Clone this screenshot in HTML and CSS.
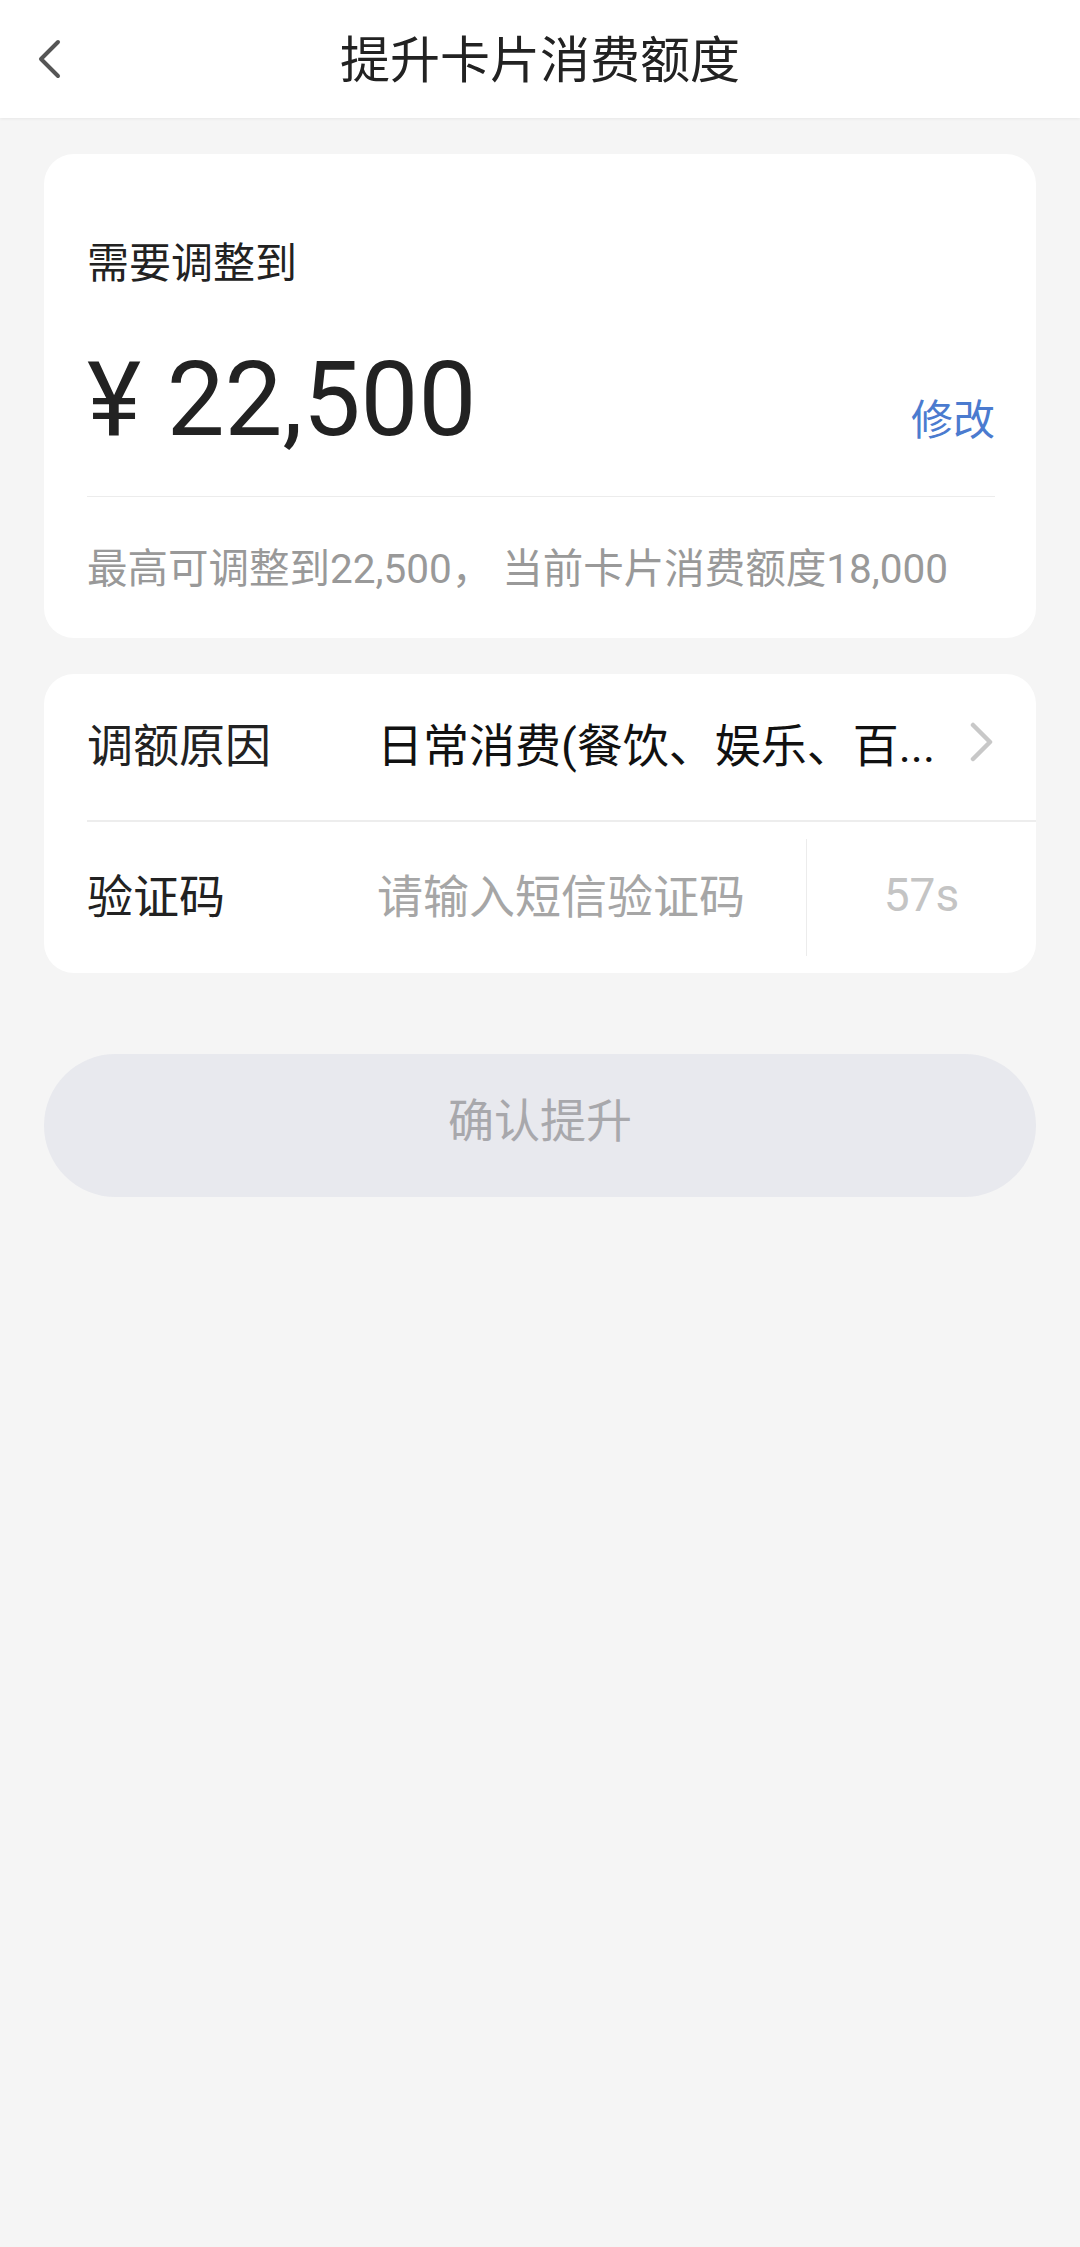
FILE: index.html
```html
<!DOCTYPE html>
<html lang="zh-CN">
<head>
<meta charset="utf-8">
<title>提升卡片消费额度</title>
<link rel="stylesheet" href="styles.css">
</head>
<body>
<header class="topbar">
  <div class="topbar-left">
    <svg class="back-icon" width="28" height="40" viewBox="0 0 28 40"><polyline points="22,3 5,20 22,37" fill="none" stroke="#555" stroke-width="4" stroke-linecap="round" stroke-linejoin="round"/></svg>
  </div>
  <h1 class="title">提升卡片消费额度</h1>
  <div class="topbar-right"></div>
</header>

<main class="content">
  <section class="card amount-card">
    <div class="amount-label">需要调整到</div>
    <div class="amount-row">
      <span class="amount">¥ 22,500</span>
      <span class="edit-link">修改</span>
    </div>
    <div class="amount-note">最高可调整到22,500， 当前卡片消费额度18,000</div>
  </section>

  <section class="card form-card">
    <div class="form-row reason-row">
      <span class="form-label">调额原因</span>
      <span class="form-value">日常消费(餐饮、娱乐、百...</span>
      <svg class="chevron" width="26" height="40" viewBox="0 0 26 40"><polyline points="4,3 21,20 4,37" fill="none" stroke="#c8c8c8" stroke-width="4.5" stroke-linecap="round" stroke-linejoin="round"/></svg>
    </div>
    <div class="form-row code-row">
      <span class="form-label">验证码</span>
      <input class="code-input" type="text" placeholder="请输入短信验证码">
      <span class="vline"></span>
      <span class="countdown">57s</span>
    </div>
  </section>

  <button class="confirm-btn" type="button">确认提升</button>
</main>
</body>
</html>
```

FILE: styles.css
```css
* {
  box-sizing: border-box;
}

html, body {
  margin: 0;
  padding: 0;
}

body {
  width: 1080px;
  min-height: 2247px;
  background: #f5f5f5;
  font-family: Roboto, "Noto Sans CJK SC", sans-serif;
  color: #222;
}

.topbar {
  height: 118px;
  background: #fff;
  display: grid;
  grid-template-columns: 1fr auto 1fr;
  align-items: center;
  box-shadow: 0 1px 3px rgba(0, 0, 0, 0.06);
}

.topbar-left {
  padding-left: 36px;
  display: flex;
  align-items: center;
}

.back-icon {
  display: block;
}

.title {
  margin: 0;
  padding-bottom: 6px;
  font-family: "Noto Sans CJK SC", sans-serif;
  font-weight: 400;
  font-size: 50px;
  line-height: 60px;
  color: #222;
}

.content {
  padding: 36px 44px 0;
  display: flex;
  flex-direction: column;
}

.card {
  background: #fff;
  border-radius: 30px;
}

.amount-card {
  padding: 81px 41px 42px 43px;
}

.amount-label {
  font-family: "Noto Sans CJK SC", sans-serif;
  font-size: 42px;
  line-height: 50px;
  color: #222;
}

.amount-row {
  margin-top: 53px;
  padding-bottom: 34px;
  border-bottom: 1px solid #ececec;
  display: flex;
  justify-content: space-between;
  align-items: baseline;
}

.amount {
  font-family: Roboto, sans-serif;
  font-size: 103px;
  line-height: 124px;
  color: #222;
}

.edit-link {
  font-family: "Noto Sans CJK SC", sans-serif;
  font-size: 42px;
  color: #4b7bcf;
}

.amount-note {
  margin-top: 48px;
  padding-bottom: 2px;
  font-size: 40.5px;
  line-height: 49px;
  color: #999;
  white-space: nowrap;
}

.form-card {
  margin-top: 36px;
  overflow: hidden;
}

.form-row {
  margin-left: 43px;
  display: flex;
  align-items: center;
  font-size: 46px;
  padding-bottom: 10px;
}

.reason-row {
  height: 148px;
  border-bottom: 2px solid #ededed;
  padding-right: 41px;
}

.code-row {
  height: 151px;
}

.form-label {
  width: 290px;
  flex: none;
  font-family: "Noto Sans CJK SC", sans-serif;
  color: #222;
}

.form-value {
  flex: 1;
  font-family: Roboto, "Noto Sans CJK SC", sans-serif;
  color: #111;
  white-space: nowrap;
  overflow: hidden;
}

.chevron {
  flex: none;
  display: block;
}

.code-input {
  flex: 1;
  min-width: 0;
  border: none;
  outline: none;
  background: transparent;
  padding: 0;
  font-family: "Noto Sans CJK SC", sans-serif;
  font-size: 46px;
  color: #222;
}

.code-input::placeholder {
  color: #a6a6a6;
}

.vline {
  flex: none;
  width: 1px;
  height: 117px;
  margin-top: 10px;
  background: #ececec;
}

.countdown {
  width: 229px;
  flex: none;
  padding-top: 4px;
  text-align: center;
  font-family: Roboto, sans-serif;
  font-size: 46px;
  color: #c4c4c4;
}

.confirm-btn {
  margin-top: 81px;
  height: 143px;
  border: none;
  border-radius: 72px;
  background: #e8e9ee;
  font-family: "Noto Sans CJK SC", sans-serif;
  font-size: 46px;
  color: #a8a8ac;
  padding: 0 0 18px;
}
```
